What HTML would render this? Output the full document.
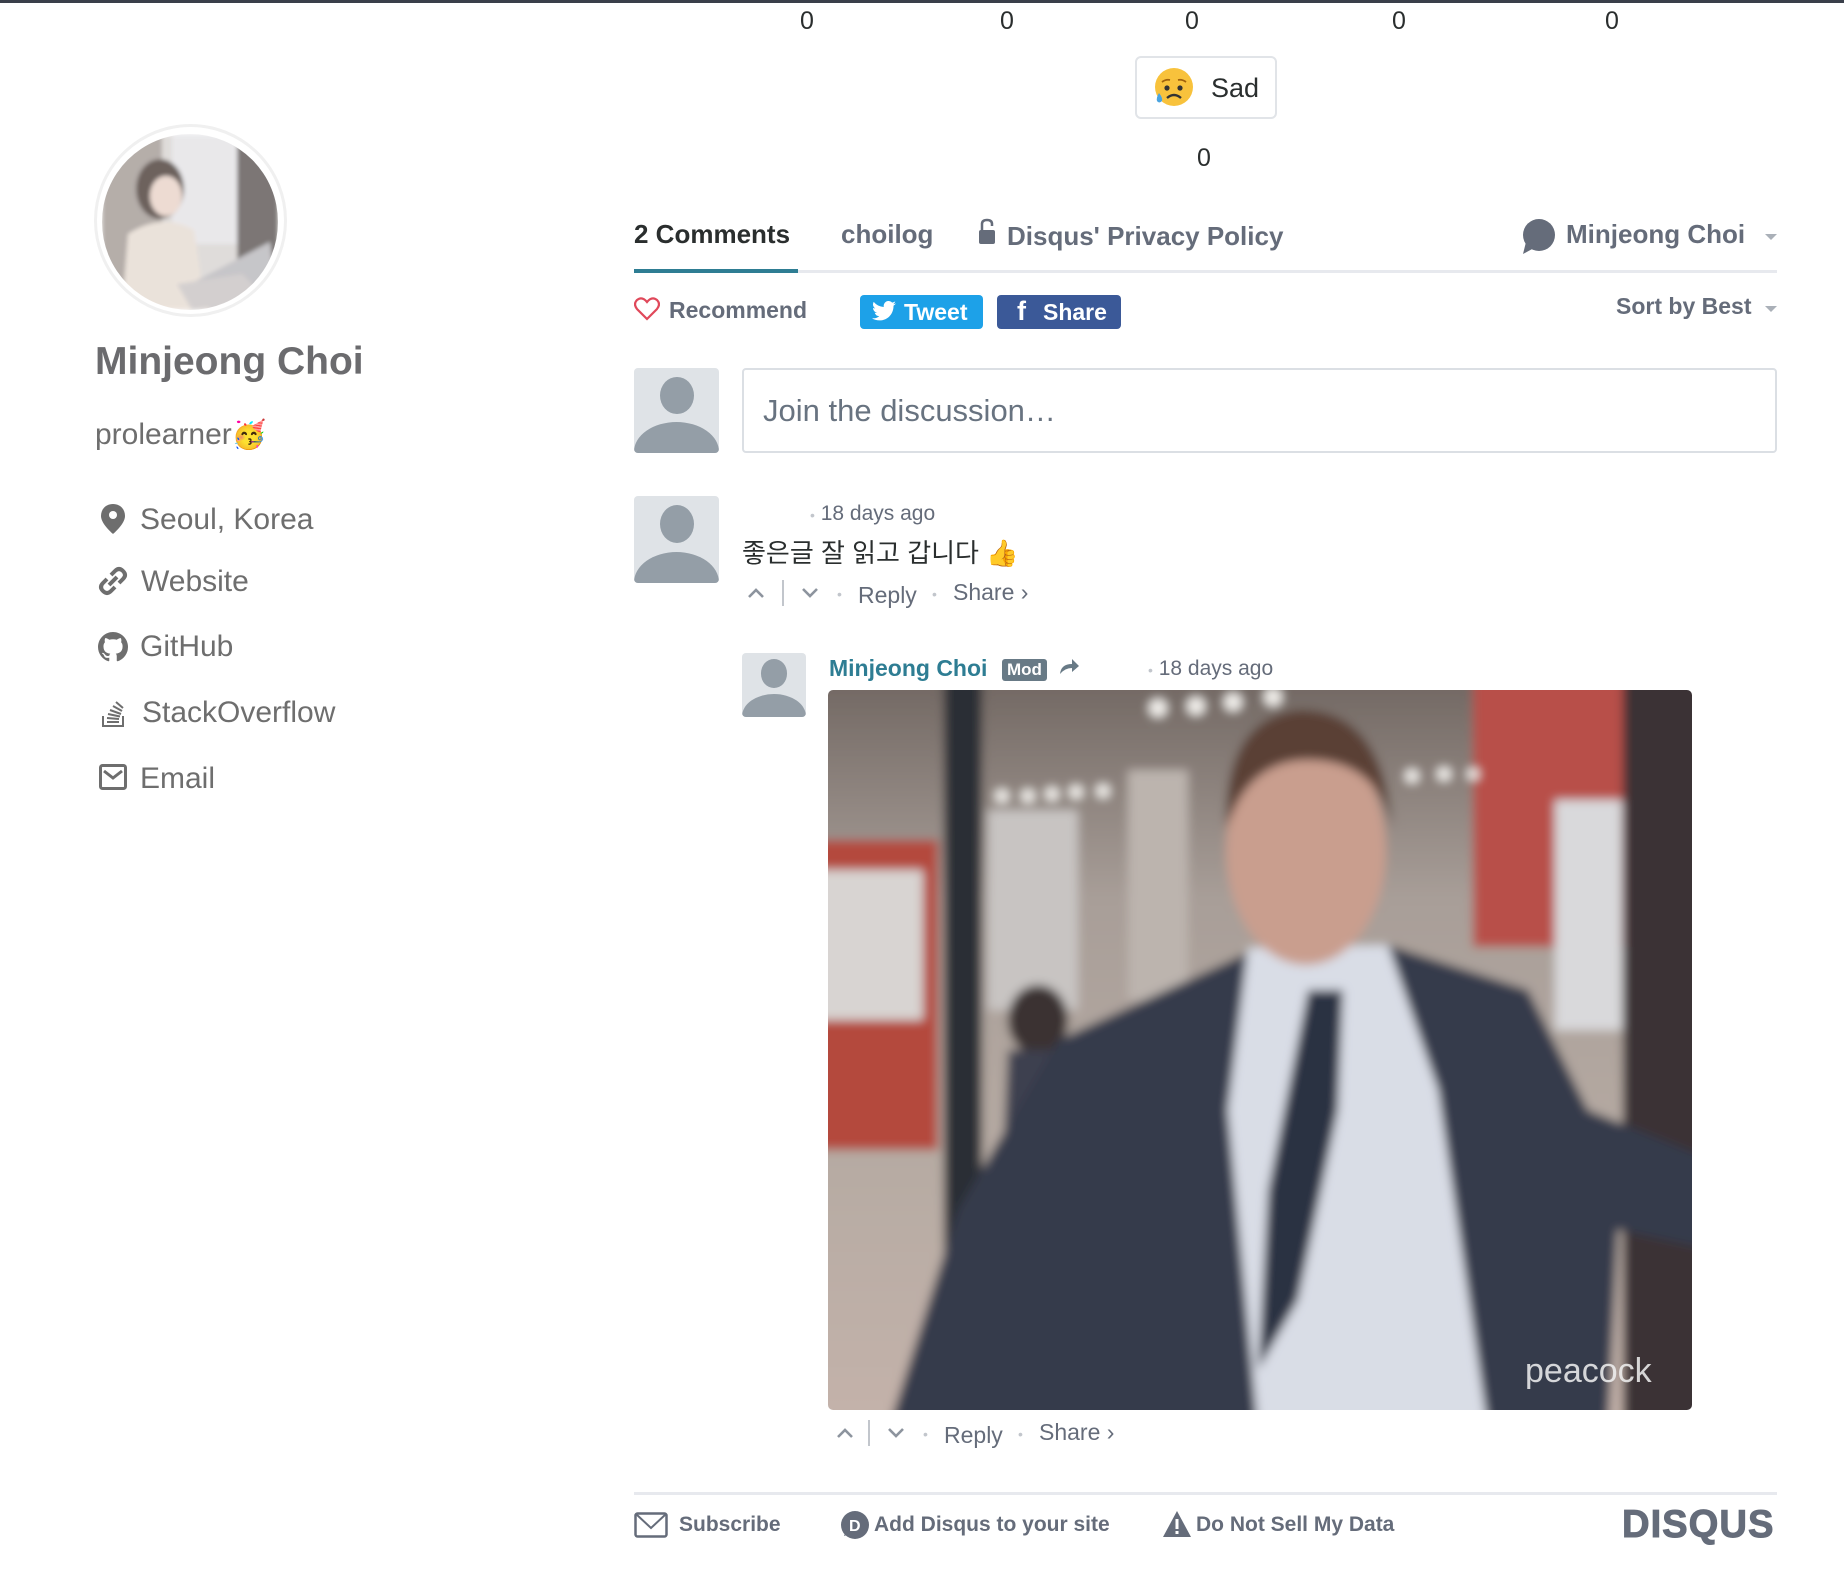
<!DOCTYPE html>
<html><head><meta charset="utf-8">
<style>
*{margin:0;padding:0;box-sizing:border-box}
body{width:1844px;height:1576px;background:#fff;position:relative;overflow:hidden;font-family:"Liberation Sans","Noto Sans CJK KR",sans-serif;color:#656c7a}
.a{position:absolute;white-space:nowrap}
.z{font-size:25px;color:#2a2e2e}
.lk{font-size:30px;color:#6e6e6e}
.b{font-weight:bold}
.av{position:absolute;background:#dfe3e7;border-radius:4px;overflow:hidden}
.av:before{content:"";position:absolute;left:30%;top:10%;width:40%;height:44%;border-radius:50%;background:#949ea7}
.av:after{content:"";position:absolute;left:0;top:64%;width:100%;height:70%;border-radius:50% 50% 0 0;background:#949ea7}
.act{font-size:23px;color:#656c7a}
.dot{color:#c2c6cc;font-size:14px}
</style></head><body>
<div class="a" style="left:0;top:0;width:1844px;height:3px;background:#3a3f4a"></div>

<div class="a z" style="left:800px;top:7px">0</div>
<div class="a z" style="left:1000px;top:7px">0</div>
<div class="a z" style="left:1185px;top:7px">0</div>
<div class="a z" style="left:1392px;top:7px">0</div>
<div class="a z" style="left:1605px;top:7px">0</div>
<div class="a" style="left:1135px;top:56px;width:142px;height:63px;border:2px solid #e1e4e8;border-radius:6px"></div>
<svg class="a" style="left:1153px;top:67px" width="42" height="42" viewBox="0 0 42 42"><circle cx="21" cy="20" r="19" fill="#f8c23c"/><circle cx="14" cy="21" r="2.6" fill="#333"/><circle cx="27" cy="21" r="2.6" fill="#333"/><path d="M9 15 Q13 12 17 13 M25 13 Q29 12 33 15" stroke="#a0620c" stroke-width="1.8" fill="none"/><path d="M14 31 Q21 25 28 31" stroke="#333" stroke-width="2.4" fill="none"/><path d="M6 26 Q3 31 4 34 Q6 37 9 34 Q10 31 6 26Z" fill="#4aa4e0"/></svg>
<div class="a z" style="left:1211px;top:73px;font-size:27px">Sad</div>
<div class="a z" style="left:1197px;top:144px">0</div>

<!-- profile -->
<div class="a" style="left:94px;top:124px;width:193px;height:193px;border-radius:50%;border:3px solid #f0f0f0"></div>
<svg class="a" style="left:102px;top:134px;opacity:.8" width="176" height="176" viewBox="0 0 176 176"><defs><clipPath id="c"><circle cx="88" cy="88" r="88"/></clipPath><filter id="f1"><feGaussianBlur stdDeviation="2"/></filter></defs><g clip-path="url(#c)" filter="url(#f1)"><rect width="176" height="176" fill="#d8d4d2"/><rect x="0" y="0" width="60" height="176" fill="#a39a94"/><rect x="70" y="0" width="65" height="110" fill="#e4e3e6"/><rect x="135" y="0" width="41" height="176" fill="#5c5452"/><ellipse cx="58" cy="55" rx="24" ry="30" fill="#4a3a36"/><ellipse cx="64" cy="62" rx="16" ry="20" fill="#e9d3c8"/><path d="M20 176 L26 100 Q60 78 92 96 L100 150 L110 176Z" fill="#e6dcd2"/><path d="M88 150 L168 108 L172 140 L110 178Z" fill="#b9b8bc"/><path d="M75 150 L140 140 L168 168 L90 176Z" fill="#c9c4c4"/></g></svg>
<div class="a b" style="left:95px;top:340px;font-size:39px;color:#6b6b6e">Minjeong Choi</div>
<div class="a lk" style="left:95px;top:418px">prolearner<span style="font-size:28px">🥳</span></div>
<svg class="a" style="left:101px;top:504px" width="24" height="30" viewBox="0 0 24 30"><path d="M12 0C5 0 0 5 0 12c0 8 12 18 12 18s12-10 12-18C24 5 19 0 12 0z" fill="#6e6e6e"/><circle cx="12" cy="11" r="4" fill="#fff"/></svg>
<div class="a lk" style="left:140px;top:503px">Seoul, Korea</div>
<svg class="a" style="left:98px;top:566px" width="30" height="30" viewBox="0 0 30 30" fill="none" stroke="#6e6e6e" stroke-width="4"><path d="M13 9 L17 5 Q21 1 25 5 Q29 9 25 13 L21 17"/><path d="M17 21 L13 25 Q9 29 5 25 Q1 21 5 17 L9 13"/><path d="M11 19 L19 11"/></svg>
<div class="a lk" style="left:141px;top:565px">Website</div>
<svg class="a" style="left:98px;top:632px" width="30" height="30" viewBox="0 0 16 16"><path fill="#6e6e6e" d="M8 0C3.580 0 0 3.58 0 8c0 3.540 2.290 6.530 5.470 7.590.4.07.55-.17.55-.38 0-.19-.01-.82-.01-1.49-2.010.37-2.530-.49-2.690-.94-.09-.23-.48-.94-.82-1.13-.28-.15-.68-.52-.01-.53.63-.01 1.080.58 1.230.82.72 1.210 1.870.87 2.330.66.07-.52.28-.87.51-1.07-1.780-.2-3.640-.89-3.640-3.950 0-.87.31-1.590.82-2.150-.08-.2-.36-1.020.08-2.120 0 0 .67-.21 2.200.82.64-.18 1.320-.27 2-.27.68 0 1.360.09 2 .27 1.530-1.040 2.200-.82 2.200-.82.44 1.100.16 1.920.08 2.120.51.56.82 1.270.82 2.150 0 3.070-1.870 3.750-3.650 3.950.29.25.54.73.54 1.480 0 1.070-.01 1.930-.01 2.200 0 .21.15.46.55.38A8.013 8.013 0 0016 8c0-4.420-3.580-8-8-8z"/></svg>
<div class="a lk" style="left:140px;top:630px">GitHub</div>
<svg class="a" style="left:101px;top:698px" width="26" height="30" viewBox="0 0 26 30" fill="none" stroke="#6e6e6e" stroke-width="2"><path d="M2 18 V28 H22 V18"/><path d="M6 24 H18 M6 20 L18 21 M7 16 L19 18.5 M9 12 L20 16 M12 8 L21 13 M15 4 L22 10"/></svg>
<div class="a lk" style="left:142px;top:696px">StackOverflow</div>
<svg class="a" style="left:99px;top:764px" width="28" height="26" viewBox="0 0 28 26"><rect x="1.5" y="1.5" width="25" height="23" rx="2" fill="none" stroke="#6e6e6e" stroke-width="3"/><path d="M5 7 L14 14 L23 7" fill="none" stroke="#6e6e6e" stroke-width="3"/></svg>
<div class="a lk" style="left:140px;top:762px">Email</div>

<!-- tabs -->
<div class="a b" style="left:634px;top:219px;font-size:26px;color:#2a2e2e">2 Comments</div>
<div class="a b" style="left:841px;top:219px;font-size:26px">choilog</div>
<svg class="a" style="left:978px;top:218px" width="18" height="28" viewBox="0 0 18 28"><path d="M4 12 V6 Q4 2 9 2 Q14 2 14 6 V8" fill="none" stroke="#656c7a" stroke-width="2.5"/><rect x="1" y="12" width="16" height="14" rx="2" fill="#656c7a"/></svg>
<div class="a b" style="left:1007px;top:221px;font-size:26px">Disqus' Privacy Policy</div>
<svg class="a" style="left:1520px;top:218px" width="36" height="38" viewBox="0 0 36 38"><ellipse cx="19" cy="17" rx="16" ry="16" fill="#656c7a"/><path d="M6 24 L3 36 L14 30Z" fill="#656c7a"/></svg>
<div class="a b" style="left:1566px;top:219px;font-size:26px">Minjeong Choi</div>
<div class="a" style="left:1765px;top:234px;border:6px solid transparent;border-top:6px solid #aab0b8"></div>
<div class="a" style="left:634px;top:270px;width:1143px;height:3px;background:#e7e9ee"></div>
<div class="a" style="left:634px;top:269px;width:164px;height:4px;background:#2e7d93"></div>

<svg class="a" style="left:634px;top:296px" width="26" height="26" viewBox="0 0 26 26"><path d="M13 23 L3 13 Q-1 8 3 4 Q8 0 13 6 Q18 0 23 4 Q27 8 23 13Z" fill="none" stroke="#e0485a" stroke-width="2.2"/></svg>
<div class="a b" style="left:669px;top:297px;font-size:23px">Recommend</div>
<div class="a" style="left:860px;top:295px;width:123px;height:34px;background:#1da1e8;border-radius:4px"></div>
<svg class="a" style="left:872px;top:301px" width="24" height="20" viewBox="0 0 24 20"><path fill="#fff" d="M24 2.4a9.8 9.8 0 01-2.8.8A4.9 4.9 0 0023.3.4a9.9 9.9 0 01-3.1 1.2A4.9 4.9 0 0011.8 6 14 14 0 011.7.9a4.9 4.9 0 001.5 6.6 4.9 4.9 0 01-2.2-.6 4.9 4.9 0 003.9 4.8 4.9 4.9 0 01-2.2.1 4.9 4.9 0 004.6 3.4A9.9 9.9 0 010 17.2 14 14 0 007.5 19.4c9.1 0 14-7.5 14-14v-.6A10 10 0 0024 2.4z"/></svg>
<div class="a b" style="left:904px;top:299px;font-size:23px;color:#fff">Tweet</div>
<div class="a" style="left:997px;top:295px;width:124px;height:34px;background:#3b5998;border-radius:4px"></div>
<div class="a b" style="left:1017px;top:296px;font-size:27px;color:#fff">f</div>
<div class="a b" style="left:1043px;top:299px;font-size:23px;color:#fff">Share</div>
<div class="a b" style="left:1616px;top:293px;font-size:23px">Sort by Best</div>
<div class="a" style="left:1765px;top:306px;border:6px solid transparent;border-top:6px solid #aab0b8"></div>

<div class="av" style="left:634px;top:368px;width:85px;height:85px"></div>
<div class="a" style="left:742px;top:368px;width:1035px;height:85px;border:2px solid #dbdfe4;border-radius:4px"></div>
<div class="a" style="left:763px;top:393px;font-size:31px;color:#687380">Join the discussion…</div>

<!-- comment 1 -->
<div class="av" style="left:634px;top:496px;width:85px;height:87px"></div>
<div class="a" style="left:810px;top:502px;font-size:21px"><span class="dot">•</span> 18 days ago</div>
<div class="a" style="left:742px;top:533px;font-size:26px;color:#2a2e2e">좋은글 잘 읽고 갑니다 👍</div>
<div class="a" style="left:745px;top:578px;width:600px">
<svg class="a" style="left:1px;top:8px" width="20" height="14" viewBox="0 0 20 14"><path d="M3 11 L10 4 L17 11" fill="none" stroke="#8d949e" stroke-width="2.6"/></svg>
<span class="a" style="left:37px;top:2px;width:2px;height:26px;background:#c2c6cc"></span>
<svg class="a" style="left:55px;top:8px" width="20" height="14" viewBox="0 0 20 14"><path d="M3 3 L10 10 L17 3" fill="none" stroke="#8d949e" stroke-width="2.6"/></svg>
<span class="a dot" style="left:92px;top:8px">•</span>
<span class="a act" style="left:113px;top:4px">Reply</span>
<span class="a dot" style="left:187px;top:8px">•</span>
<span class="a act" style="left:208px;top:1px">Share ›</span>
</div>

<!-- reply -->
<div class="av" style="left:742px;top:653px;width:64px;height:64px"></div>
<div class="a b" style="left:829px;top:655px;font-size:23px;color:#2e7d93">Minjeong Choi</div>
<div class="a b" style="left:1002px;top:659px;font-size:17px;color:#fff;background:#687a86;border-radius:3px;padding:1px 5px">Mod</div>
<svg class="a" style="left:1058px;top:656px" width="22" height="20" viewBox="0 0 22 20"><path d="M2 18 Q3 8 14 8 V3 L21 10 L14 16 V12 Q7 12 2 18Z" fill="#687a86"/></svg>
<div class="a" style="left:1148px;top:657px;font-size:21px"><span class="dot">•</span> 18 days ago</div>

<svg class="a" style="left:828px;top:690px;border-radius:5px" width="864" height="720" viewBox="0 0 864 720">
<defs><linearGradient id="bg" x1="0" y1="0" x2="0" y2="1"><stop offset="0" stop-color="#6f6560"/><stop offset=".3" stop-color="#a89e98"/><stop offset=".7" stop-color="#b8aca4"/><stop offset="1" stop-color="#c4b2aa"/></linearGradient><filter id="bl"><feGaussianBlur stdDeviation="5"/></filter><clipPath id="ic"><rect width="864" height="720"/></clipPath></defs>
<g clip-path="url(#ic)"><g filter="url(#bl)">
<rect x="-20" y="-20" width="904" height="760" fill="url(#bg)"/>
<rect x="160" y="120" width="90" height="200" fill="#c8c4c2"/>
<rect x="300" y="80" width="60" height="230" fill="#bcb4ae"/>
<rect x="-20" y="150" width="130" height="310" fill="#b4483e"/>
<rect x="-20" y="180" width="115" height="150" fill="#d8d4d2"/>
<rect x="645" y="-20" width="155" height="277" fill="#b85048"/>
<rect x="727" y="110" width="67" height="230" fill="#d9d9db"/>
<rect x="795" y="-20" width="89" height="760" fill="#3a3336"/>
<rect x="116" y="-20" width="38" height="660" fill="#2c2e36"/>
<g fill="#f4f2ee"><circle cx="330" cy="18" r="9"/><circle cx="368" cy="16" r="9"/><circle cx="405" cy="12" r="9"/><circle cx="445" cy="7" r="9"/><circle cx="174" cy="106" r="7"/><circle cx="200" cy="106" r="7"/><circle cx="224" cy="104" r="7"/><circle cx="248" cy="102" r="7"/><circle cx="275" cy="101" r="7"/><circle cx="584" cy="86" r="7"/><circle cx="616" cy="84" r="7"/><circle cx="645" cy="84" r="6"/></g>
<ellipse cx="210" cy="330" rx="30" ry="35" fill="#3a3032"/>
<path d="M180 360 L240 360 L250 470 L175 470Z" fill="#3c4050"/>
<path d="M60 740 L130 520 L230 350 L430 258 L560 255 L700 300 L760 420 L884 470 L884 560 L790 540 L780 740Z" fill="#353a4c"/>
<path d="M420 258 L560 255 L610 400 L660 740 L430 740 L400 420Z" fill="#d9dde6"/>
<path d="M480 300 L515 300 L510 420 L470 610 L430 680 L440 500Z" fill="#2c3142"/>
<ellipse cx="478" cy="160" rx="80" ry="115" fill="#c99e8e"/>
<path d="M398 140 Q395 30 470 20 Q555 18 565 140 Q550 70 480 70 Q420 70 398 140Z" fill="#5a4036"/>
</g></g>
<text x="697" y="692" font-family="Liberation Sans,sans-serif" font-size="34" fill="#f2f2f2" opacity=".85">peacock</text>
</svg>

<div class="a" style="left:834px;top:1418px;width:600px">
<svg class="a" style="left:1px;top:8px" width="20" height="14" viewBox="0 0 20 14"><path d="M3 11 L10 4 L17 11" fill="none" stroke="#8d949e" stroke-width="2.6"/></svg>
<span class="a" style="left:34px;top:2px;width:2px;height:26px;background:#c2c6cc"></span>
<svg class="a" style="left:52px;top:8px" width="20" height="14" viewBox="0 0 20 14"><path d="M3 3 L10 10 L17 3" fill="none" stroke="#8d949e" stroke-width="2.6"/></svg>
<span class="a dot" style="left:89px;top:8px">•</span>
<span class="a act" style="left:110px;top:4px">Reply</span>
<span class="a dot" style="left:184px;top:8px">•</span>
<span class="a act" style="left:205px;top:1px">Share ›</span>
</div>

<!-- footer -->
<div class="a" style="left:634px;top:1492px;width:1143px;height:3px;background:#e7e9ee"></div>
<svg class="a" style="left:634px;top:1512px" width="34" height="26" viewBox="0 0 34 26"><rect x="1.5" y="1.5" width="31" height="23" rx="2" fill="none" stroke="#656c7a" stroke-width="2.5"/><path d="M2 2 L17 16 L32 2" fill="none" stroke="#656c7a" stroke-width="2"/></svg>
<div class="a b" style="left:679px;top:1513px;font-size:21px">Subscribe</div>
<svg class="a" style="left:840px;top:1510px" width="30" height="30" viewBox="0 0 30 30"><circle cx="15" cy="15" r="14" fill="#656c7a"/><path d="M4 26 L6 20 L10 24Z" fill="#656c7a"/><text x="9" y="21" font-family="Liberation Sans" font-weight="bold" font-size="16" fill="#fff">D</text></svg>
<div class="a b" style="left:874px;top:1513px;font-size:21px">Add Disqus to your site</div>
<svg class="a" style="left:1162px;top:1510px" width="30" height="28" viewBox="0 0 30 28"><path d="M15 1 L29 27 H1Z" fill="#656c7a"/><rect x="13.5" y="9" width="3" height="10" fill="#fff"/><rect x="13.5" y="21" width="3" height="3" fill="#fff"/></svg>
<div class="a b" style="left:1196px;top:1513px;font-size:21px">Do Not Sell My Data</div>
<div class="a b" style="left:1622px;top:1503px;font-size:39px;color:#656c7a;letter-spacing:1px;transform:scaleX(.98);transform-origin:left;-webkit-text-stroke:1px #656c7a">DISQUS</div>
</body></html>
